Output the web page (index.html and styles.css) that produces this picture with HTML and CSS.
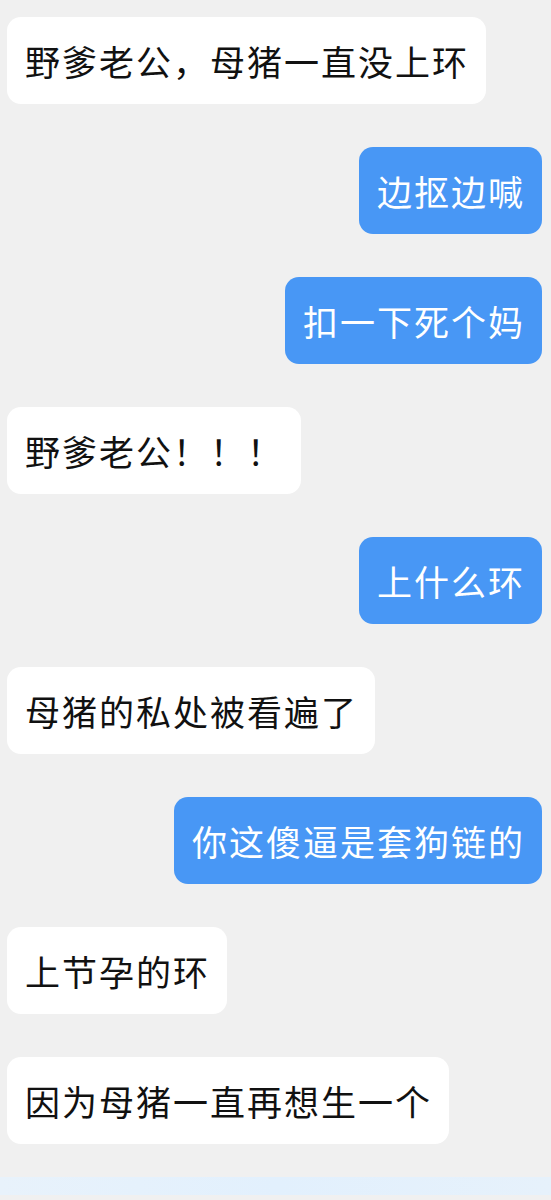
FILE: index.html
```html
<!DOCTYPE html>
<html lang="zh-CN">
<head>
    <meta charset="UTF-8">
    <meta name="viewport" content="width=device-width, initial-scale=1.0">
    <title>聊天</title>
    <link rel="stylesheet" href="styles.css">
</head>
<body>
    <div class="chat">
        <div class="msg left"><div class="bubble">野爹老公，母猪一直没上环</div></div>
        <div class="msg right"><div class="bubble">边抠边喊</div></div>
        <div class="msg right"><div class="bubble">扣一下死个妈</div></div>
        <div class="msg left"><div class="bubble">野爹老公！！！</div></div>
        <div class="msg right"><div class="bubble">上什么环</div></div>
        <div class="msg left"><div class="bubble">母猪的私处被看遍了</div></div>
        <div class="msg right"><div class="bubble">你这傻逼是套狗链的</div></div>
        <div class="msg left"><div class="bubble">上节孕的环</div></div>
        <div class="msg left"><div class="bubble">因为母猪一直再想生一个</div></div>
    </div>
    <div class="input-bar"></div>
</body>
</html>
```

FILE: styles.css
```css
body {
    margin: 0;
    height: 1200px;
    background-color: #f0f0f0;
    font-family: "Noto Sans CJK SC", "Noto Sans", sans-serif;
    overflow: hidden;
    display: flex;
    flex-direction: column;
}
.chat {
    flex: 1;
    display: flex;
    flex-direction: column;
    gap: 43px;
    padding: 17px 9px 0 7px;
}
.msg {
    display: flex;
}
.msg.left {
    justify-content: flex-start;
}
.msg.right {
    justify-content: flex-end;
}
.bubble {
    height: 87px;
    box-sizing: border-box;
    display: flex;
    align-items: center;
    padding: 0 17px 0 18px;
    border-radius: 14px;
    font-size: 35px;
    letter-spacing: 2px;
    line-height: 1;
    color: #111;
    background-color: #fff;
}
.msg.right .bubble {
    background-color: #4897f5;
    color: #fff;
}
.input-bar {
    height: 18px;
    margin-bottom: 5px;
    background: linear-gradient(90deg, #e8f2fb, #e2f0fd 50%, #e6f1fb);
}
```
